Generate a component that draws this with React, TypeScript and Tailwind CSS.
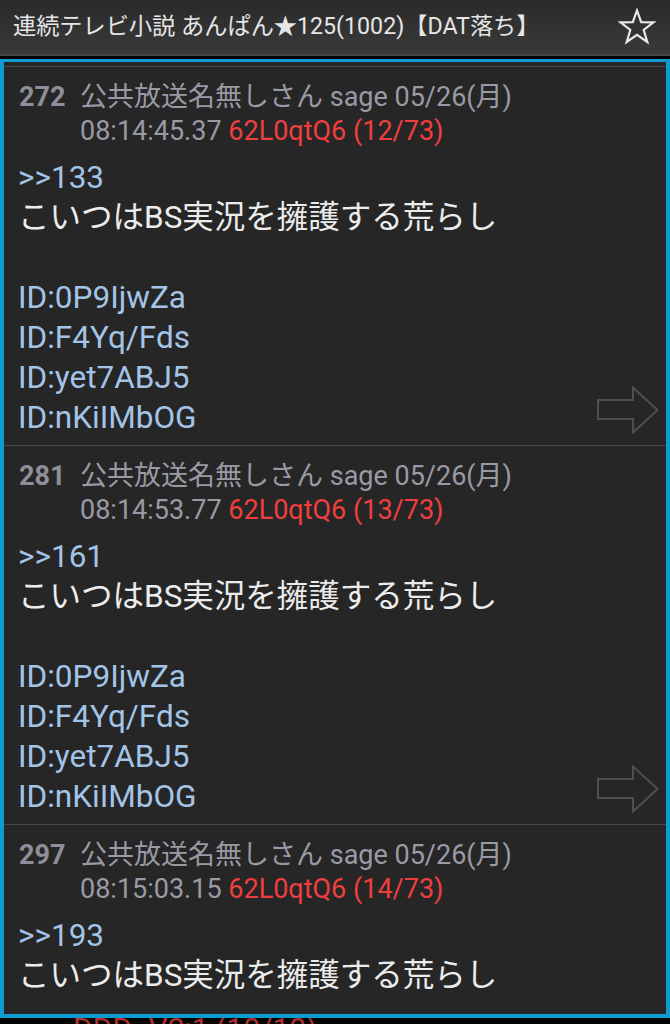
import React from "react";

type Post = { no: number; time: string; count: string; anchor: string; ids: string[]; arrow: boolean };

const FONT = "font-['Roboto','Noto_Sans_CJK_JP',sans-serif]";

const posts: Post[] = [
  { no: 272, time: "08:14:45.37", count: "(12/73)", anchor: ">>133", ids: ["ID:0P9IjwZa", "ID:F4Yq/Fds", "ID:yet7ABJ5", "ID:nKiIMbOG"], arrow: true },
  { no: 281, time: "08:14:53.77", count: "(13/73)", anchor: ">>161", ids: ["ID:0P9IjwZa", "ID:F4Yq/Fds", "ID:yet7ABJ5", "ID:nKiIMbOG"], arrow: true },
  { no: 297, time: "08:15:03.15", count: "(14/73)", anchor: ">>193", ids: ["ID:0P9IjwZa", "ID:F4Yq/Fds", "ID:yet7ABJ5", "ID:nKiIMbOG"], arrow: true },
];

export default function App() {
  return (
    <div className={`h-screen w-full overflow-hidden bg-black ${FONT}`}>
      <header className="flex h-[56px] items-center justify-between border-b-2 border-[#464646] bg-gradient-to-b from-[#2a2a2a] to-[#3a3a3a] pl-[13px] pr-[14px]">
        <h1 className="text-[23.2px] leading-none text-[#e6e6e6]">連続テレビ小説 あんぱん★125(1002)【DAT落ち】</h1>
        <StarIcon />
      </header>

      <div className="mt-[3px] h-[959px] overflow-hidden border-4 border-t-[3px] border-[#0d9bd2] bg-[#262626] pt-[4px]">
        {posts.map((post) => <PostItem key={post.no} post={post} />)}
      </div>

      <div className="h-[6px] overflow-hidden pl-[73px]">
        <div className="-mt-[9px] text-[30px] leading-[40px] text-[#b43030]">DDD=V2:1 (10/10)</div>
      </div>
    </div>
  );
}

function PostItem({ post }: { post: Post }) {
  return (
    <div className="relative border-t border-[#474747] pl-[15px] pr-[14px] pt-[13px] pb-[7px]">
      <div className="flex text-[27px] leading-[34px] text-[#9a9aa4]">
        <span className="w-[61px] shrink-0 font-bold text-[#8f8f99]">{post.no}</span>
        <div>
          <div>公共放送名無しさん sage 05/26(月)</div>
          <div>
            {post.time} <span className="text-[#ef3f3f]">62L0qtQ6 {post.count}</span>
          </div>
        </div>
      </div>
      <div className="mt-[10px] -ml-[1px] text-[31.5px] leading-[40px]">
        <div className="text-[#a3c4e6]">{post.anchor}</div>
        <div className="text-[#ececec]">こいつはBS実況を擁護する荒らし</div>
        <div className="h-[40px]" />
        {post.ids.map((id) => <div key={id} className="text-[#a3c4e6]">{id}</div>)}
      </div>
      {post.arrow && <ArrowIcon />}
    </div>
  );
}

function ArrowIcon() {
  return (
    <svg className="absolute bottom-[11px] right-[7px]" width="62" height="48" viewBox="0 0 62 48" fill="none">
      <polygon points="1,14 36,14 36,1.5 60.5,24 36,46.5 36,33 1,33" stroke="#4f4f4f" strokeWidth="2" strokeLinejoin="miter" />
    </svg>
  );
}

function StarIcon() {
  return (
    <svg width="38" height="38" viewBox="0 0 38 38" fill="none">
      <polygon points="19,2.5 23.2,14.2 35.5,14.4 25.7,22 29.3,34 19,26.8 8.7,34 12.3,22 2.5,14.4 14.8,14.2" stroke="#e8e8e8" strokeWidth="2.2" strokeLinejoin="miter" />
    </svg>
  );
}
